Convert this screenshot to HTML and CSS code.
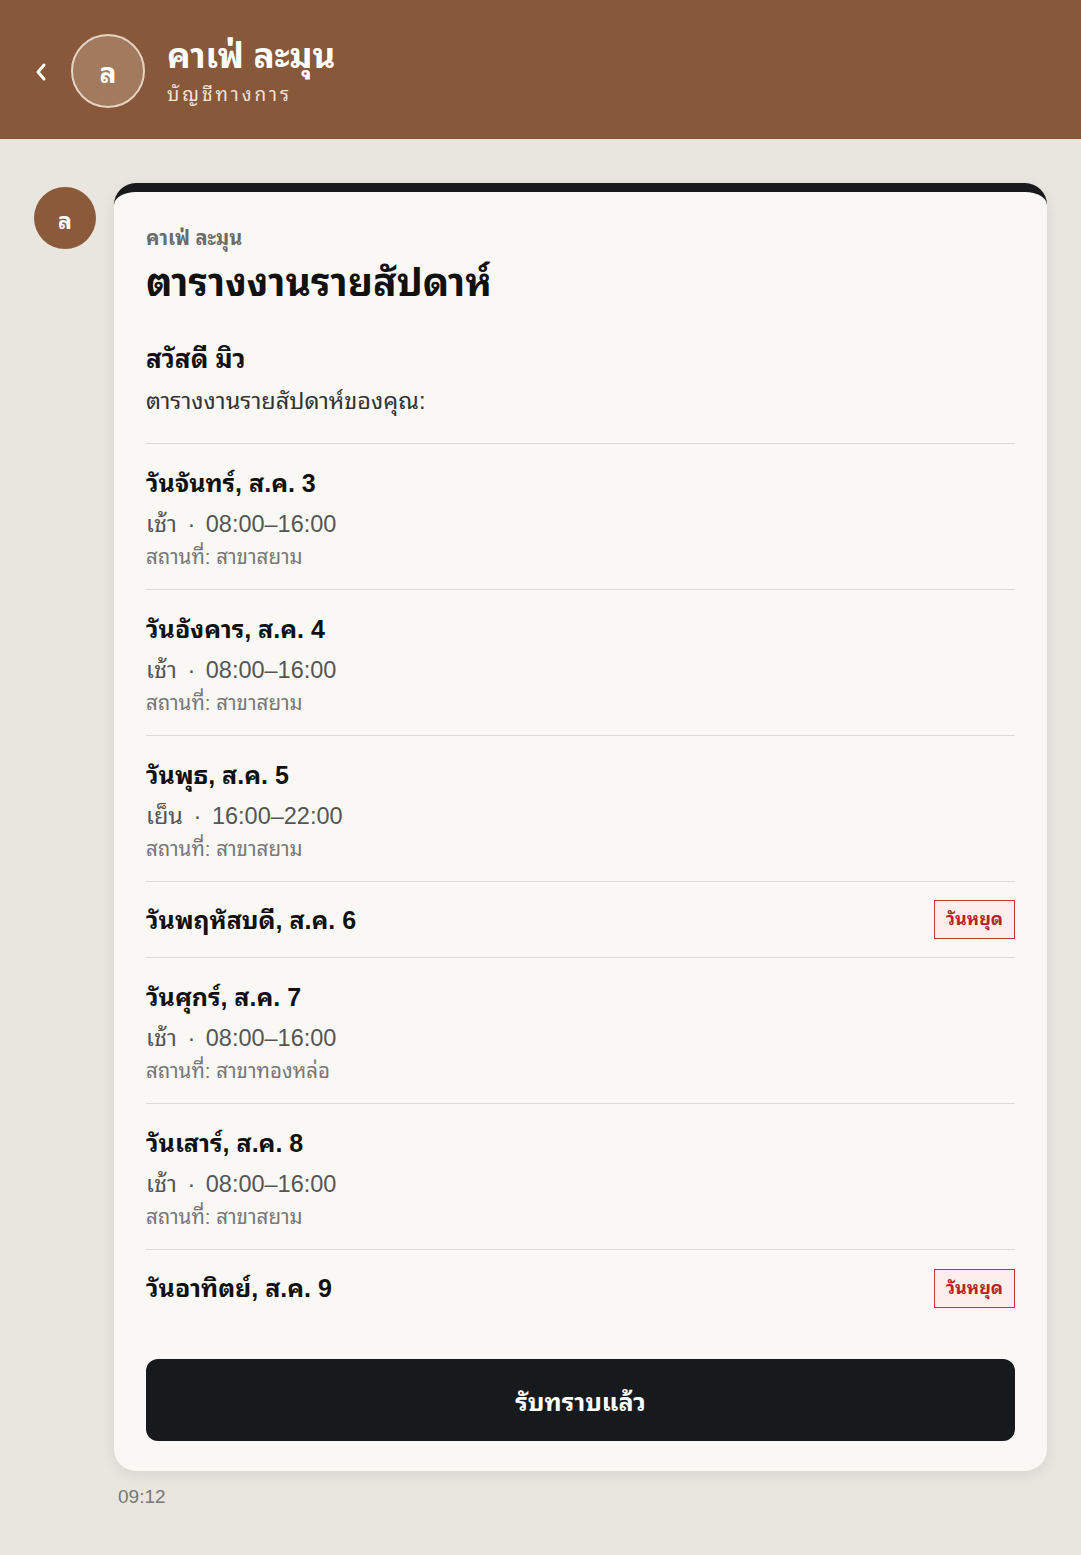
FILE: index.html
```html
<!DOCTYPE html>
<html lang="th">

<head>
  <meta charset="UTF-8">
  <title>คาเฟ่ ละมุน</title>
  <link rel="stylesheet" href="styles.css">
</head>

<body>
<div class="top">
  <span class="back">
    <svg width="14" height="22" viewBox="0 0 14 22"><path d="M10 4 L4 11 L10 18" fill="none" stroke="#fff" stroke-width="3" stroke-linecap="round" stroke-linejoin="round"/></svg>
  </span>
  <div class="top-avatar">ล</div>
  <div class="top-info">
    <h1>คาเฟ่ ละมุน</h1>
    <p>บัญชีทางการ</p>
  </div>
</div>

<div class="chat">
  <div class="avatar">ล</div>
  <div class="msg">
    <div class="card">
      <div class="from">คาเฟ่ ละมุน</div>
      <h2 class="title">ตารางงานรายสัปดาห์</h2>
      <div class="hello">สวัสดี มิว</div>
      <div class="intro">ตารางงานรายสัปดาห์ของคุณ:</div>

      <ul class="days">
        <li>
          <div class="day">วันจันทร์, ส.ค. 3</div>
          <div class="shift">เช้า <i>·</i> 08:00–16:00</div>
          <div class="place">สถานที่: สาขาสยาม</div>
        </li>
        <li>
          <div class="day">วันอังคาร, ส.ค. 4</div>
          <div class="shift">เช้า <i>·</i> 08:00–16:00</div>
          <div class="place">สถานที่: สาขาสยาม</div>
        </li>
        <li>
          <div class="day">วันพุธ, ส.ค. 5</div>
          <div class="shift">เย็น <i>·</i> 16:00–22:00</div>
          <div class="place">สถานที่: สาขาสยาม</div>
        </li>
        <li class="off">
          <div class="day">วันพฤหัสบดี, ส.ค. 6</div>
          <span class="badge">วันหยุด</span>
        </li>
        <li>
          <div class="day">วันศุกร์, ส.ค. 7</div>
          <div class="shift">เช้า <i>·</i> 08:00–16:00</div>
          <div class="place">สถานที่: สาขาทองหล่อ</div>
        </li>
        <li>
          <div class="day">วันเสาร์, ส.ค. 8</div>
          <div class="shift">เช้า <i>·</i> 08:00–16:00</div>
          <div class="place">สถานที่: สาขาสยาม</div>
        </li>
        <li class="off">
          <div class="day">วันอาทิตย์, ส.ค. 9</div>
          <span class="badge">วันหยุด</span>
        </li>
      </ul>

      <button class="ok">รับทราบแล้ว</button>
    </div>
    <div class="time">09:12</div>
  </div>
</div>
</body>

</html>
```

FILE: styles.css
```css
* {
  padding: 0;
  margin: 0;
  box-sizing: border-box;
}

body {
  background-color: #e8e6df;
  font-family: "Liberation Sans", "Noto Sans Thai Looped", "Loma", "Garuda", "Tlwg Typo", "Noto Sans Thai", "Noto Sans", sans-serif;
  color: #111;
  min-height: 1555px;
}

ul {
  list-style: none;
}

i {
  font-style: normal;
  margin: 0 4px;
}

.top {
  display: flex;
  align-items: center;
  height: 139px;
  padding-left: 34px;
  background-color: #87583a;
  color: #fff;
}

.back {
  display: flex;
  width: 14px;
  margin-right: 23px;
  margin-top: 4px;
}

.top-avatar {
  display: flex;
  align-items: center;
  justify-content: center;
  width: 74px;
  height: 74px;
  border-radius: 50%;
  border: 2px solid #e6d3c3;
  background-color: #a27b5f;
  font-size: 28px;
  font-weight: bold;
  margin-top: 2px;
}

.top-info {
  margin-left: 22px;
  margin-top: 2px;
}

.top-info h1 {
  font-size: 35px;
  font-weight: bold;
  line-height: 46px;
}

.top-info p {
  font-size: 19px;
  letter-spacing: 3px;
  color: #f1e4d8;
  line-height: 28px;
  margin-top: 2px;
}

.chat {
  display: flex;
  align-items: flex-start;
  padding: 44px 34px 0 34px;
}

.avatar {
  display: flex;
  align-items: center;
  justify-content: center;
  flex: none;
  width: 62px;
  height: 62px;
  margin-top: 4px;
  border-radius: 50%;
  background-color: #8b5a3a;
  color: #fff;
  font-size: 23px;
  font-weight: bold;
}

.msg {
  flex: 1;
  margin-left: 18px;
}

.card {
  padding: 32px 32px 30px;
  background-color: #f9f8f5;
  border-top: 9px solid #17191b;
  border-radius: 22px;
  box-shadow: 0 4px 14px rgba(0, 0, 0, 0.08);
}

.from {
  font-size: 20px;
  font-weight: bold;
  color: #6b6b6b;
  line-height: 28px;
}

.title {
  font-size: 39px;
  font-weight: bold;
  line-height: 54px;
  margin-top: 4px;
}

.hello {
  font-size: 26px;
  font-weight: bold;
  line-height: 36px;
  margin-top: 31px;
}

.intro {
  font-size: 23.5px;
  color: #333;
  line-height: 32px;
  margin-top: 8px;
}

.days {
  margin-top: 26px;
  border-top: 1px solid #dcdad5;
}

.days li {
  height: 146px;
  padding-top: 22px;
  border-bottom: 1px solid #dcdad5;
}

.days li.off {
  display: flex;
  align-items: center;
  justify-content: space-between;
  height: 76px;
  padding-top: 0;
}

.day {
  font-size: 25px;
  font-weight: bold;
  line-height: 34px;
}

.shift {
  font-size: 23.5px;
  color: #555;
  line-height: 34px;
  margin-top: 7px;
}

.place {
  font-size: 20.5px;
  color: #777;
  line-height: 28px;
  margin-top: 2px;
}

.badge {
  height: 39px;
  line-height: 37px;
  padding: 0 11px;
  border: 1px solid #c8333a;
  background-color: #fdeeee;
  color: #b8232a;
  font-size: 18px;
  font-weight: bold;
}

.days li:last-child {
  border-bottom: none;
}

.ok {
  display: block;
  width: 100%;
  height: 82px;
  margin-top: 33px;
  border: none;
  border-radius: 12px;
  background-color: #171a1c;
  color: #fff;
  font-family: inherit;
  font-size: 25px;
  font-weight: bold;
}

.time {
  margin-top: 15px;
  margin-left: 4px;
  font-size: 19px;
  color: #777;
}
```
